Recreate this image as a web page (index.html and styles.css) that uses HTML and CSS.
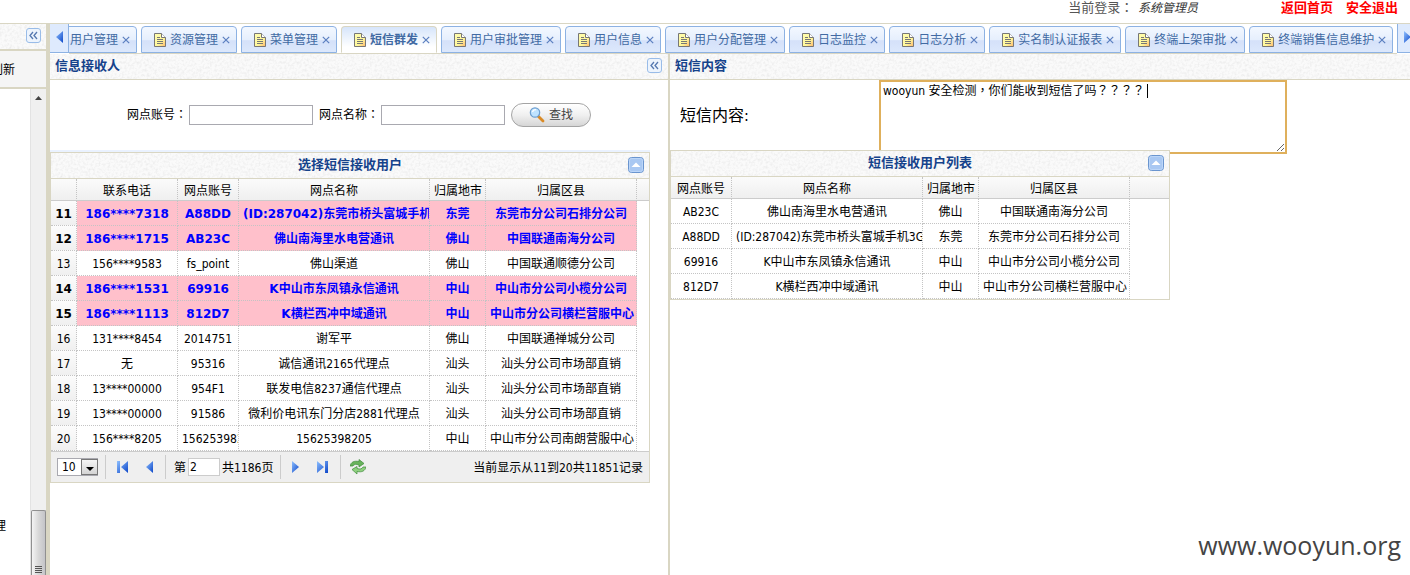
FILE: index.html
```
<!DOCTYPE html>
<html lang="zh-CN">
<head>
<meta charset="utf-8">
<title>短信群发</title>
<link rel="stylesheet" href="styles.css">
</head>
<body>
<svg class="sprite" aria-hidden="true">
  <defs>
    <linearGradient id="arrow-fill" x1="0" y1="0" x2="1" y2="1"><stop offset="0" stop-color="#8fc0ff"/><stop offset="1" stop-color="#0c46c8"/></linearGradient>
    <linearGradient id="page-fill" x1="0" y1="0" x2="1" y2="1"><stop offset="0" stop-color="#fffdb0"/><stop offset="0.6" stop-color="#fff89a"/><stop offset="1" stop-color="#ffb56b"/></linearGradient>
    <symbol id="doc" viewBox="0 0 12 14"><path d="M.5.5h7l4 4v9H.5z" fill="url(#page-fill)" stroke="#777"/><path d="M7.5.5v4h4" fill="#fff" stroke="#777"/><path d="M3 4.5h3M3 6.500h6M3 8.500h6M3 10.500h6" stroke="#777"/></symbol>
    <symbol id="close" viewBox="0 0 8 8"><path d="M.8.8l6.400 6.400M7.200.8L.8 7.200" stroke="#5b7fc0" stroke-width="1.200"/></symbol>
    <symbol id="fold" viewBox="0 0 15 15"><rect x=".5" y=".5" width="14" height="14" rx="2.500" fill="#edf4fd" stroke="#99bce8"/><path d="M7 4L4 7.500 7 11M11 4L8 7.500l3 3.500" fill="none" stroke="#5578b0" stroke-width="1.300"/></symbol>
    <symbol id="up" viewBox="0 0 16 16"><rect x=".5" y=".5" width="15" height="15" rx="3" fill="#a9c8f2" stroke="#6a95cf"/><rect x="1.500" y="1.500" width="13" height="13" rx="2" fill="none" stroke="#bcd6f8"/><path d="M3.500 10L8 5.500l4.500 4.500z" fill="#fff"/></symbol>
    <symbol id="tri-left" viewBox="0 0 7 12"><path d="M7 0v12L0 6z" fill="url(#arrow-fill)"/></symbol>
    <symbol id="tri-right" viewBox="0 0 7 12"><path d="M0 0v12l7-6z" fill="url(#arrow-fill)"/></symbol>
    <symbol id="first" viewBox="0 0 11 12"><path d="M0 0h3v12H0zM11 0v12L4 6z" fill="url(#arrow-fill)"/></symbol>
    <symbol id="last" viewBox="0 0 11 12"><path d="M8 0h3v12H8zM0 0v12l7-6z" fill="url(#arrow-fill)"/></symbol>
    <symbol id="refresh" viewBox="0 0 16 16"><path d="M0 7C1 3 4 1.500 9 2.500V.5l5 4-5 3.500V6C6 5 4 5 3 7z" fill="#68b35b" stroke="#3d8a3b" stroke-width=".7"/><path d="M16 8c-1 4-4 5.500-9 4.500v2.500l-5-4.500L7 7.500v2c3 1 5 .5 6-1.500z" fill="#8fd07f" stroke="#3d8a3b" stroke-width=".7"/></symbol>
    <symbol id="search" viewBox="0 0 16 16"><path d="M9 9l5 5" stroke="#d98a26" stroke-width="2.800" stroke-linecap="round"/><circle cx="6" cy="5.500" r="4.700" fill="#bfe3ff" stroke="#6e9fd0" stroke-width="1.200"/><path d="M3.500 5A3 3 0 0 1 7 2.800" fill="none" stroke="#fff" stroke-width="1.300"/></symbol>
  </defs>
</svg>

<header class="topbar">
  <span class="who">当前登录<span class="mid">：</span> <em>系统管理员</em></span>
  <a class="toplink" href="#">返回首页</a>
  <a class="toplink" href="#">安全退出</a>
</header>

<div class="workspace">
  <aside class="sidebar">
    <div class="side-title grain"><button class="icon-button" aria-label="收起菜单"><svg width="15" height="15"><use href="#fold"/></svg></button></div>
    <div class="side-tools"><button class="refresh-menu">刷新</button></div>
    <div class="side-body">
      <div class="side-tree"><span class="tree-item">理</span></div>
      <div class="scrollbar">
        <svg class="scroll-up" width="7" height="4" viewBox="0 0 7 4"><path d="M0 4l3.500-4L7 4z" fill="#444"/></svg>
        <div class="thumb"><i></i><i></i><i></i><i></i></div>
      </div>
    </div>
  </aside>

  <main class="main">
    <nav class="tabbar">
      <button class="scroller" aria-label="向左滚动"><svg width="7" height="12"><use href="#tri-left"/></svg></button>
      <div class="tab-view">
        <div class="tabs">
          <button class="tab"><svg width="12" height="14"><use href="#doc"/></svg>用户管理<svg width="8" height="8"><use href="#close"/></svg></button>
          <button class="tab"><svg width="12" height="14"><use href="#doc"/></svg>资源管理<svg width="8" height="8"><use href="#close"/></svg></button>
          <button class="tab"><svg width="12" height="14"><use href="#doc"/></svg>菜单管理<svg width="8" height="8"><use href="#close"/></svg></button>
          <button class="tab active"><svg width="12" height="14"><use href="#doc"/></svg>短信群发<svg width="8" height="8"><use href="#close"/></svg></button>
          <button class="tab"><svg width="12" height="14"><use href="#doc"/></svg>用户审批管理<svg width="8" height="8"><use href="#close"/></svg></button>
          <button class="tab"><svg width="12" height="14"><use href="#doc"/></svg>用户信息<svg width="8" height="8"><use href="#close"/></svg></button>
          <button class="tab"><svg width="12" height="14"><use href="#doc"/></svg>用户分配管理<svg width="8" height="8"><use href="#close"/></svg></button>
          <button class="tab"><svg width="12" height="14"><use href="#doc"/></svg>日志监控<svg width="8" height="8"><use href="#close"/></svg></button>
          <button class="tab"><svg width="12" height="14"><use href="#doc"/></svg>日志分析<svg width="8" height="8"><use href="#close"/></svg></button>
          <button class="tab"><svg width="12" height="14"><use href="#doc"/></svg>实名制认证报表<svg width="8" height="8"><use href="#close"/></svg></button>
          <button class="tab"><svg width="12" height="14"><use href="#doc"/></svg>终端上架审批<svg width="8" height="8"><use href="#close"/></svg></button>
          <button class="tab"><svg width="12" height="14"><use href="#doc"/></svg>终端销售信息维护<svg width="8" height="8"><use href="#close"/></svg></button>
        </div>
      </div>
      <button class="scroller next" aria-label="向右滚动"><svg width="7" height="12"><use href="#tri-right"/></svg></button>
    </nav>

    <div class="panes">
      <section class="pane receivers">
        <div class="pane-title grain"><h2>信息接收人</h2><button class="icon-button" aria-label="收起"><svg width="15" height="15"><use href="#fold"/></svg></button></div>
        <form class="search-form">
          <label for="account">网点账号<span class="mid">：</span></label><input class="field" id="account" type="text">
          <label for="shop">网点名称<span class="mid">：</span></label><input class="field" id="shop" type="text">
          <button class="search-button" type="button"><svg width="16" height="16"><use href="#search"/></svg>查找</button>
        </form>
        <div class="form-edge"></div>
        <div class="grid-panel wide">
          <div class="grid-title grain"><h3>选择短信接收用户</h3><button class="icon-button" aria-label="折叠"><svg width="16" height="16"><use href="#up"/></svg></button></div>
          <table class="grid">
            <colgroup><col class="c-num"><col class="c-phone"><col class="c-account"><col class="c-name"><col class="c-city"><col class="c-area"><col></colgroup>
            <thead><tr><th></th><th>联系电话</th><th>网点账号</th><th>网点名称</th><th>归属地市</th><th>归属区县</th><th class="rest"></th></tr></thead>
            <tbody>
              <tr class="picked"><td class="num">11</td><td>186****7318</td><td>A88DD</td><td>(ID:287042)东莞市桥头富城手机3G</td><td>东莞</td><td>东莞市分公司石排分公司</td><td class="rest"></td></tr>
              <tr class="picked"><td class="num">12</td><td>186****1715</td><td>AB23C</td><td>佛山南海里水电营通讯</td><td>佛山</td><td>中国联通南海分公司</td><td class="rest"></td></tr>
              <tr><td class="num">13</td><td>156****9583</td><td>fs_point</td><td>佛山渠道</td><td>佛山</td><td>中国联通顺德分公司</td><td class="rest"></td></tr>
              <tr class="picked"><td class="num">14</td><td>186****1531</td><td>69916</td><td>K中山市东凤镇永信通讯</td><td>中山</td><td>中山市分公司小榄分公司</td><td class="rest"></td></tr>
              <tr class="picked"><td class="num">15</td><td>186****1113</td><td>812D7</td><td>K横栏西冲中域通讯</td><td>中山</td><td>中山市分公司横栏营服中心</td><td class="rest"></td></tr>
              <tr><td class="num">16</td><td>131****8454</td><td>2014751</td><td>谢军平</td><td>佛山</td><td>中国联通禅城分公司</td><td class="rest"></td></tr>
              <tr><td class="num">17</td><td>无</td><td>95316</td><td>诚信通讯2165代理点</td><td>汕头</td><td>汕头分公司市场部直销</td><td class="rest"></td></tr>
              <tr><td class="num">18</td><td>13****00000</td><td>954F1</td><td>联发电信8237通信代理点</td><td>汕头</td><td>汕头分公司市场部直销</td><td class="rest"></td></tr>
              <tr><td class="num">19</td><td>13****00000</td><td>91586</td><td>微利价电讯东门分店2881代理点</td><td>汕头</td><td>汕头分公司市场部直销</td><td class="rest"></td></tr>
              <tr><td class="num">20</td><td>156****8205</td><td>15625398205</td><td>15625398205</td><td>中山</td><td>中山市分公司南朗营服中心</td><td class="rest"></td></tr>
            </tbody>
          </table>
          <div class="pager">
            <div class="pager-group"><span class="select-box"><select aria-label="每页条数"><option>10</option></select><span class="select-arrow"></span></span></div>
            <div class="pager-group arrows"><button class="icon-button" aria-label="首页"><svg width="11" height="12"><use href="#first"/></svg></button><button class="icon-button" aria-label="上一页"><svg width="7" height="12"><use href="#tri-left"/></svg></button></div>
            <div class="pager-group page-no"><label for="page">第</label><input id="page" type="text" value="2"><span>共1186页</span></div>
            <div class="pager-group arrows"><button class="icon-button" aria-label="下一页"><svg width="7" height="12"><use href="#tri-right"/></svg></button><button class="icon-button" aria-label="末页"><svg width="11" height="12"><use href="#last"/></svg></button></div>
            <button class="icon-button reload" aria-label="刷新"><svg width="16" height="16"><use href="#refresh"/></svg></button>
            <span class="pager-info">当前显示从11到20共11851记录</span>
          </div>
        </div>
      </section>

      <section class="pane content">
        <div class="pane-title grain"><h2>短信内容</h2></div>
        <form class="message-form">
          <label for="message">短信内容:</label>
          <div class="message-box"><textarea class="mid" id="message">wooyun 安全检测，你们能收到短信了吗？？？？</textarea><span class="caret"></span></div>
        </form>
        <div class="grid-panel narrow">
          <div class="grid-title grain"><h3>短信接收用户列表</h3><button class="icon-button" aria-label="折叠"><svg width="16" height="16"><use href="#up"/></svg></button></div>
          <table class="grid">
            <colgroup><col class="c-account"><col class="c-name"><col class="c-city"><col class="c-area"><col></colgroup>
            <thead><tr><th>网点账号</th><th>网点名称</th><th>归属地市</th><th>归属区县</th><th class="rest"></th></tr></thead>
            <tbody>
              <tr><td>AB23C</td><td>佛山南海里水电营通讯</td><td>佛山</td><td>中国联通南海分公司</td><td class="rest"></td></tr>
              <tr><td>A88DD</td><td>(ID:287042)东莞市桥头富城手机3G</td><td>东莞</td><td>东莞市分公司石排分公司</td><td class="rest"></td></tr>
              <tr><td>69916</td><td>K中山市东凤镇永信通讯</td><td>中山</td><td>中山市分公司小榄分公司</td><td class="rest"></td></tr>
              <tr><td>812D7</td><td>K横栏西冲中域通讯</td><td>中山</td><td>中山市分公司横栏营服中心</td><td class="rest"></td></tr>
            </tbody>
          </table>
        </div>
      </section>
    </div>
  </main>
</div>
<div class="site-mark">www.wooyun.org</div>
</body>
</html>
```

FILE: styles.css
```
:root {
  --line: #d9d6c3;
  --tab-line: #8db2e3;
  --title: #15428b;
}

* { box-sizing: border-box; }

body {
  margin: 0;
  height: 100vh;
  display: flex;
  flex-direction: column;
  overflow: hidden;
  position: relative;
  background: #fff;
  color: #000;
  font: 12px/16px "DejaVu Sans Condensed", "Noto Sans", "Noto Sans CJK SC", sans-serif;
}

button, input, select, textarea { font: inherit; color: inherit; }
button { padding: 0; border: 0; background: none; }
svg { display: block; flex: none; }
h2, h3 { margin: 0; color: var(--title); font-size: 13px; line-height: 18px; }
.sprite { position: absolute; width: 0; height: 0; }
.icon-button { display: block; flex: none; }

/* full-width punctuation set in the middle of its square */
.mid {
  font-family: "DejaVu Sans Condensed", "Noto Sans CJK TC", sans-serif;
  font-feature-settings: "locl" 0;
}

.grain {
  background-color: #fafafa;
  background-image: url("data:image/svg+xml,%3Csvg xmlns='http://www.w3.org/2000/svg' width='160' height='26'%3E%3Cfilter id='n'%3E%3CfeTurbulence type='fractalNoise' baseFrequency='.4' numOctaves='2' stitchTiles='stitch'/%3E%3CfeColorMatrix values='0 0 0 0 .5 0 0 0 0 .5 0 0 0 0 .5 .5 0 0 0 -.21'/%3E%3C/filter%3E%3Crect width='160' height='26' filter='url(%23n)'/%3E%3C/svg%3E");
}

/* top bar */
.topbar {
  flex: none;
  display: flex;
  justify-content: flex-end;
  height: 24px;
  padding-right: 12px;
  border-bottom: 1px solid var(--line);
  font-size: 13px;
}
.who { margin-right: 70px; color: #555; }
.who em { margin-left: 1px; color: #333; font-size: 12px; }
.toplink { margin-left: 13px; color: #f00; font-weight: bold; text-decoration: none; }

.workspace { flex: 1; display: flex; min-height: 0; }

/* side menu */
.sidebar {
  flex: none;
  width: 50px;
  display: flex;
  flex-direction: column;
  border-right: 4px solid var(--line);
  overflow: hidden;
}
.side-title {
  display: flex;
  justify-content: flex-end;
  padding: 4px 5px 6px;
  border-bottom: 2px solid var(--line);
}
.side-tools {
  height: 38px;
  display: flex;
  align-items: center;
  border-bottom: 2px solid var(--line);
  background: #f5f5f5;
}
.refresh-menu { margin-left: -9px; padding-top: 2px; white-space: nowrap; }
.side-body { flex: 1; display: flex; min-height: 0; }
.side-tree { flex: 1; display: flex; align-items: flex-end; padding-bottom: 41px; }
.tree-item { margin-left: -6px; }
.scrollbar {
  width: 16px;
  display: flex;
  flex-direction: column;
  justify-content: space-between;
  align-items: center;
  padding-top: 7px;
  border-left: 1px solid #e3e3e3;
  background: #f0f0f0;
}
.thumb {
  width: 15px;
  height: 65px;
  display: flex;
  flex-direction: column;
  justify-content: flex-end;
  align-items: center;
  gap: 1px;
  padding-bottom: 2px;
  border: 1px solid #909090;
  border-bottom: 0;
  border-radius: 2px 2px 0 0;
  background: linear-gradient(90deg, #f4f4f4, #d8d8d8 50%, #c4c4c8);
}
.thumb i { width: 7px; height: 1px; background: #555; }

/* tabs */
.main { flex: 1; display: flex; flex-direction: column; min-width: 0; }
.tabbar { flex: none; display: flex; height: 30px; }
.scroller {
  flex: none;
  width: 19px;
  height: 29px;
  display: flex;
  justify-content: center;
  padding-top: 7px;
  border: 1px solid var(--tab-line);
  border-width: 0 1px 1px 0;
  background: #deeafd;
}
.scroller.next { width: 13px; justify-content: flex-start; padding-left: 6px; border-width: 0 0 1px 1px; }
.tab-view { flex: 1; min-width: 0; overflow: hidden; padding-top: 2px; border-bottom: 1px solid var(--line); }
.tabs { display: flex; gap: 4px; margin-left: -28px; }
.tab {
  flex: none;
  height: 27px;
  display: flex;
  align-items: center;
  gap: 4px;
  padding: 0 6px 0 12px;
  border: 1px solid var(--tab-line);
  border-radius: 4px 4px 0 0;
  background: linear-gradient(#f3f8ff, #e6effd 50%, #d5e1f9 55%, #dce8fc);
  color: #416aa3;
  white-space: nowrap;
}
.tab.active { border-color: var(--line); border-bottom-color: #fff; background: linear-gradient(#d6e5fb, #fff 80%); font-weight: bold; }

/* panes */
.panes { flex: 1; display: flex; min-height: 0; }
.receivers { flex: none; width: 620px; border-right: 2px solid var(--line); }
.content { flex: 1; min-width: 0; }
.pane-title {
  display: flex;
  justify-content: space-between;
  align-items: center;
  height: 26px;
  padding: 0 6px 2px 5px;
  border-bottom: 1px solid var(--line);
}

.search-form { display: flex; align-items: center; height: 70px; padding-left: 77px; }
.field {
  width: 124px;
  height: 20px;
  margin: 0 6px 0 2px;
  border: 1px solid #a9a9b0;
  background: #fff;
}
.search-button {
  display: flex;
  align-items: center;
  gap: 4px;
  height: 24px;
  padding: 0 17px;
  border: 1px solid #a4a4a4;
  border-radius: 12px;
  background: linear-gradient(#fff, #f0f0f0 50%, #d6d6d6);
  color: #444;
}
.form-edge { width: 600px; height: 2px; background: #eaf2ff; }

/* grids */
.grid-panel { position: relative; border: 1px solid var(--line); background: #fff; }
.wide { width: 600px; }
.narrow { width: 500px; }
.grid-title {
  display: flex;
  align-items: center;
  height: 26px;
  padding: 0 5px 1px 21px;
  border-bottom: 1px solid var(--line);
}
.grid-title h3 { flex: 1; text-align: center; }

.grid { width: 100%; table-layout: fixed; border-collapse: separate; border-spacing: 0; }
.c-num { width: 26px; }
.c-phone { width: 101px; }
.c-account { width: 61px; }
.c-name { width: 191px; }
.c-city { width: 56px; }
.c-area { width: 151px; }
.grid th, .grid td {
  padding: 2px 4px 0;
  border-right: 1px dotted #c4c4c4;
  border-bottom: 1px dotted #c4c4c4;
  overflow: hidden;
  white-space: nowrap;
  text-align: center;
}
.grid th {
  height: 22px;
  border-bottom: 1px solid #ccc;
  background: linear-gradient(#fbfbfb, #efefef);
  font-weight: normal;
}
.grid td { height: 25px; }
.grid td.num { padding: 2px 0 0; background: linear-gradient(#fcfcfc, #f0f0f0); }
.grid th.rest { border-right: 0; }
.grid td.rest { border: 0; }
.picked { font-family: "DejaVu Sans", "Noto Sans CJK SC", sans-serif; font-weight: bold; }
.picked td:not(.num):not(.rest) { background: #ffc0cb; color: #00f; }

/* pager */
.pager { display: flex; align-items: center; height: 31px; padding: 0 6px; border-top: 1px solid #ccc; background: #efefef; }
.pager-group { height: 24px; display: flex; align-items: center; border-right: 1px solid #ccc; }
.select-box { position: relative; margin-right: 7px; }
.select-box select {
  display: block;
  width: 41px;
  height: 18px;
  padding: 0 0 0 4px;
  border: 1px solid #a9a9b0;
  border-radius: 0;
  background: #fff;
  appearance: none;
}
.select-arrow {
  position: absolute;
  top: 1px;
  right: 0;
  width: 17px;
  height: 16px;
  border: 1px solid #777;
  background: linear-gradient(#f6f6f6, #d4d4d4);
  pointer-events: none;
}
.select-arrow::after {
  content: "";
  position: absolute;
  top: 7px;
  left: 4px;
  border: 4px solid transparent;
  border-top-color: #000;
  border-bottom: 0;
}
.arrows { gap: 18px; padding: 0 12px 0 11px; }
.page-no { padding: 0 6px 0 8px; }
.page-no label, .page-no span, .pager-info { padding-top: 2px; }
.page-no input { width: 32px; height: 18px; margin: 0 2px; padding: 0 1px; border: 1px solid #ccc; background: #fff; }
.reload { margin-left: 9px; }
.pager-info { margin-left: auto; }

/* message editor */
.message-form { display: flex; height: 70px; padding-left: 10px; }
.message-form label { width: 199px; padding-top: 24px; font-size: 16px; line-height: 24px; }
.message-box { position: relative; width: 408px; height: 74px; }
.message-box textarea {
  display: block;
  width: 100%;
  height: 100%;
  padding: 1px 2px;
  border: 2px solid #dfb05c;
  background: #fff;
  font-size: 12px;
  outline: none;
  resize: both;
}
.message-box textarea.mid { font-family: "DejaVu Sans Condensed", "Noto Sans CJK TC", sans-serif; }
.caret { position: absolute; top: 4px; left: 268px; width: 1px; height: 14px; background: #000; }

.site-mark {
  position: absolute;
  right: 9px;
  bottom: 14px;
  color: #444;
  font: 25px/32px "Open Sans", "Noto Sans", sans-serif;
}
```
